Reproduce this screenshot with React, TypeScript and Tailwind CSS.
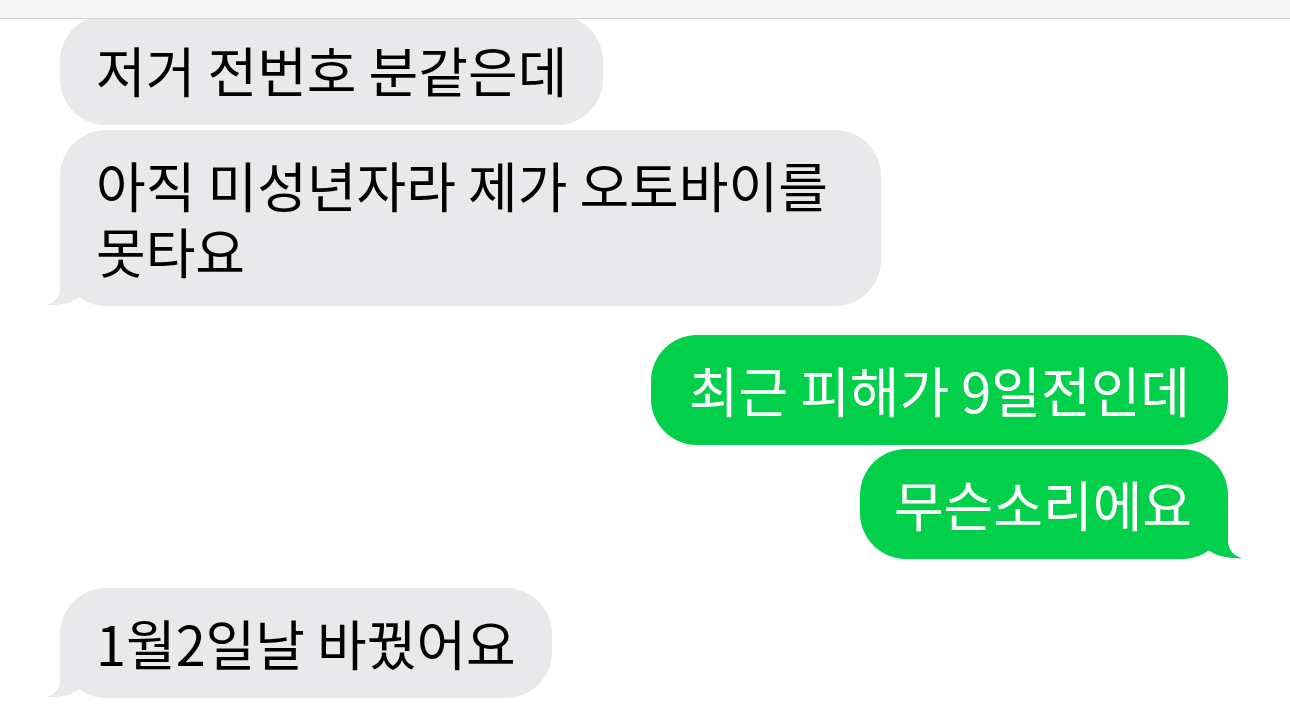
import type { ReactNode } from 'react';

const GRAY = '#e9e9eb';
const GREEN = '#02d04b';

function Tail({ side, color }: { side: 'left' | 'right'; color: string }) {
  // drawn relative to the bubble's bottom corner, spills out sideways
  if (side === 'left') {
    return (
      <svg
        className="absolute bottom-0 left-[-16px]"
        width="40"
        height="48"
        viewBox="-16 -47 40 48"
        overflow="visible"
      >
        <path d="M0,-46 L0,-18 C0,-7 -7,-1 -15,0 C-4,1 12,-1 21,-9 L21,-46 Z" fill={color} />
      </svg>
    );
  }
  return (
    <svg
      className="absolute bottom-0 right-[-16px]"
      width="40"
      height="48"
      viewBox="-24 -47 40 48"
      overflow="visible"
    >
      <path d="M0,-46 L0,-18 C0,-7 7,-1 15,0 C4,1 -12,-1 -21,-9 L-21,-46 Z" fill={color} />
    </svg>
  );
}

function Bubble({
  side,
  tail,
  className = '',
  pad = 'px-[36px]',
  children,
}: {
  side: 'left' | 'right';
  tail?: boolean;
  className?: string;
  pad?: string;
  children: ReactNode;
}) {
  const mine = side === 'right';
  return (
    <div className={`flex ${mine ? 'justify-end' : 'justify-start'} ${className}`}>
      <div
        className={`relative rounded-[46px] ${pad} py-[22px] text-[54px] leading-[66px] whitespace-nowrap ${
          mine ? 'bg-[#02d04b] text-white' : 'bg-[#e9e9eb] text-black'
        }`}
      >
        {tail && <Tail side={side} color={mine ? GREEN : GRAY} />}
        <span className="relative">{children}</span>
      </div>
    </div>
  );
}

export default function App() {
  return (
    <div className="relative h-[718px] w-[1290px] overflow-hidden bg-white font-['Noto_Sans_CJK_KR','Noto_Sans',sans-serif]">
      <div className="flex flex-col pt-[15px] pl-[60px] pr-[62px]">
        <Bubble side="left">저거 전번호 분같은데</Bubble>
        <Bubble side="left" tail pad="pl-[36px] pr-[53px]" className="mt-[5px]">
          아직 미성년자라 제가 오토바이를
          <br />
          못타요
        </Bubble>
        <Bubble side="right" pad="px-[38px]" className="mt-[29px]">
          최근 피해가 9일전인데
        </Bubble>
        <Bubble side="right" tail pad="pl-[34px] pr-[36px]" className="mt-[4px]">
          무슨소리에요
        </Bubble>
        <Bubble side="left" tail className="mt-[29px]">
          1월2일날 바꿨어요
        </Bubble>
      </div>

      <div className="absolute inset-x-0 top-0 h-[19px] border-b-[1.5px] border-[#d3d3d3] bg-[#f6f6f6]" />
    </div>
  );
}
